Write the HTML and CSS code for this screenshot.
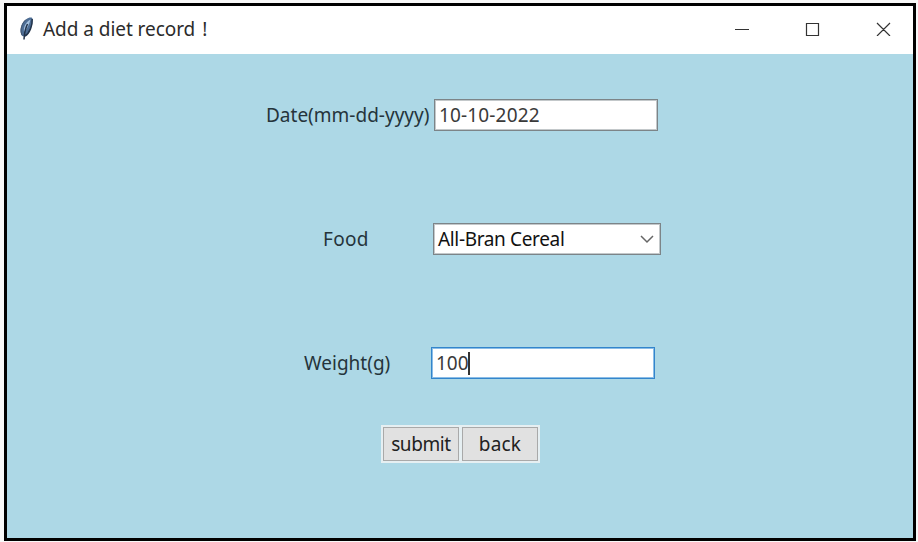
FILE: index.html
```html
<!DOCTYPE html>
<html lang="en">
<head>
<meta charset="utf-8">
<title>Add a diet record !</title>
<link rel="stylesheet" href="styles.css">
</head>
<body>
<main class="window">
  <header class="titlebar">
    <svg class="feather" width="16" height="26" viewBox="0 0 16 26">
      <path d="M3 20C0 15 2 7 7 3.500C10 1 13.500 1 13.500 3C14 9 11 17 6 20.500Z" fill="#4d6d94"/>
      <path d="M5 16C4 11 7 6 11.500 3.500C10.500 8 8 13 5 16Z" fill="#a3bfdc"/>
      <path d="M13.200 3C13.500 9 11 17 6 20M8.500 8Q5.500 14 5 23.500" fill="none" stroke="#22334a" stroke-width="1.500"/>
      <path d="M3 19C0.500 14 3 7 7 3.500" fill="none" stroke="#3f536d"/>
    </svg>
    <h1 class="title"><span>Add a diet record</span><span class="bang">!</span></h1>
    <svg class="controls" width="156" height="14" viewBox="0 0 156 14" fill="none" stroke="#333" stroke-width="1.200">
      <path d="M0 7.500H14M71.500 1.500h12v12h-12zM142 1l13 13M155 1l-13 13"/>
    </svg>
  </header>
  <form class="form">
    <div class="row">
      <label class="label date-label">Date(mm-dd-yyyy)</label>
      <div class="field date-field"><span class="digits">10-10-2022</span></div>
    </div>
    <div class="row">
      <label class="label food-label">Food</label>
      <div class="field food-field"><span class="choice">All-Bran Cereal</span>
        <svg width="14" height="9" viewBox="0 0 14 9" fill="none" stroke="#666" stroke-width="1.500"><path d="M1 1l6 6 6-6"/></svg>
      </div>
    </div>
    <div class="row">
      <label class="label weight-label">Weight(g)</label>
      <div class="field weight-field"><span class="amount">100</span><i class="caret"></i></div>
    </div>
    <div class="actions">
      <button type="button"><span class="submit">submit</span></button>
      <button type="button"><span class="back">back</span></button>
    </div>
  </form>
</main>
</body>
</html>
```
FILE: styles.css
```css
* { box-sizing: border-box; }
body {
  margin: 0;
  padding: 3px 2px 1px 4px;
  height: 542px;
  overflow: hidden;
  background: #f8f8f8;
  font-family: "Noto Sans", "Open Sans", sans-serif;
  font-size: 19px;
  color: #25343b;
}
.window {
  height: 538px;
  border: 3px solid #000;
  background: #add8e6;
}
.titlebar {
  display: flex;
  align-items: center;
  height: 48px;
  padding: 0 22px 2px 12px;
  background: #fff;
}
.feather { margin-right: 8px; }
.title {
  margin: 0;
  font-size: 19px;
  font-weight: 400;
  line-height: 26px;
  color: #2b2b2b;
  white-space: nowrap;
}
.bang { margin-left: 4px; }
.title span:first-child { letter-spacing: -0.05px; }
.controls { margin-left: auto; }
.form { padding-top: 45px; }
.row {
  display: flex;
  height: 32px;
  margin-bottom: 92px;
}
.label {
  line-height: 32px;
  white-space: nowrap;
}
.date-label { margin-left: 259px; width: 168px; }
.food-label { margin-left: 316px; width: 110px; letter-spacing: 0.3px; }
.weight-label { margin-left: 297px; width: 127px; }
.field {
  display: flex;
  align-items: center;
  width: 224px;
  height: 32px;
  padding-left: 4px;
  border: 1px solid #7c8488;
  box-shadow: inset 0 0 0 1px #c3c8ca;
  background: #fff;
  color: #3a3a3a;
  white-space: nowrap;
}
.digits { letter-spacing: 0.15px; }
.food-field {
  justify-content: space-between;
  width: 228px;
  padding: 0 6px 0 4px;
  color: #111;
}
.choice { letter-spacing: -0.35px; }
.weight-field { border-color: #3385cc; box-shadow: inset 0 0 0 1px #8bbde6; }
.caret {
  width: 2px;
  height: 23px;
  margin-left: -1px;
  background: #333;
}
.actions {
  display: flex;
  gap: 3px;
  width: 159px;
  height: 38px;
  margin: -46px 0 0 374px;
  padding: 2px;
  background: #e6eff2;
}
button {
  flex: 1;
  padding: 0;
  border: 1px solid #a9a9a9;
  background: #e1e1e1;
  color: #222;
  font: inherit;
}
.submit { letter-spacing: -0.4px; }
.back { letter-spacing: 0.2px; }
.bang { margin-left: 7px; }
```
